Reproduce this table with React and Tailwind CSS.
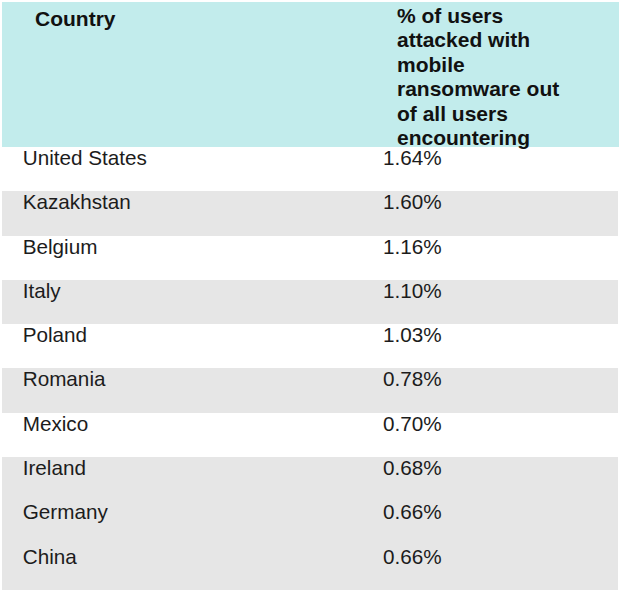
import React from 'react';

// Top 10 countries by share of users attacked with mobile ransomware
const rows = [
  { country: 'United States', share: '1.64%', shaded: false },
  { country: 'Kazakhstan', share: '1.60%', shaded: true },
  { country: 'Belgium', share: '1.16%', shaded: false },
  { country: 'Italy', share: '1.10%', shaded: true },
  { country: 'Poland', share: '1.03%', shaded: false },
  { country: 'Romania', share: '0.78%', shaded: true },
  { country: 'Mexico', share: '0.70%', shaded: false },
  { country: 'Ireland', share: '0.68%', shaded: true },
  { country: 'Germany', share: '0.66%', shaded: true },
  { country: 'China', share: '0.66%', shaded: true },
];

export default function App() {
  return (
    <div className="w-[620px] h-[604px] bg-white pt-[2px] pl-[2px] font-['Liberation_Sans',Arial,sans-serif] text-[#1c1c1c]">
      {/* Header */}
      <div className="flex w-[617px] h-[145px] bg-[#c2ecec] font-bold text-[21px] leading-[24.5px] text-[#111]">
        <div className="w-[381px] pl-[33px] pt-[5px]">Country</div>
        <div className="w-[178px] pl-[14px] pt-[1.5px]">
          % of users attacked with mobile ransomware out of all users encountering
        </div>
      </div>

      {/* Body */}
      <div className="w-[616px]">
        {rows.map((r) => (
          <div
            key={r.country}
            className={`flex h-[44.3px] text-[20.7px] leading-[22px] ${r.shaded ? 'bg-[#e6e6e6]' : 'bg-white'}`}
          >
            <div className="w-[381px] pl-[20.7px]">{r.country}</div>
            <div>{r.share}</div>
          </div>
        ))}
      </div>
    </div>
  );
}
